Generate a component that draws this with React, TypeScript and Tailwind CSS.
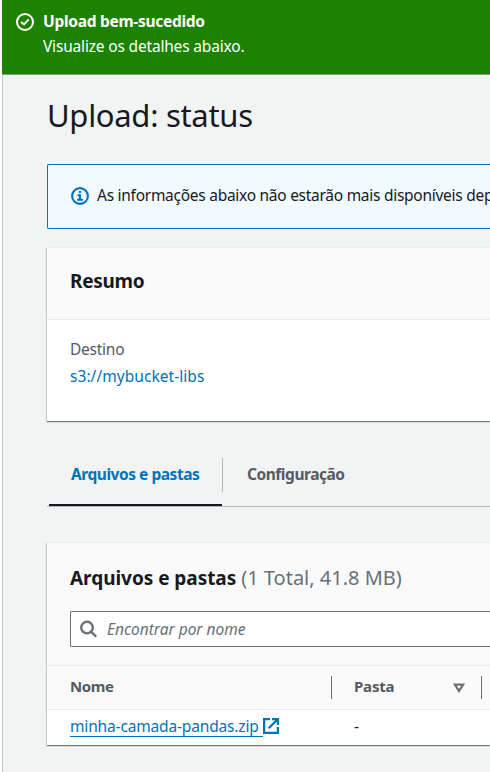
import React from "react";

const FONT = "font-['Noto_Sans','Open_Sans',sans-serif]";

function CheckCircle() {
  return (
    <svg className="h-[18px] w-[18px] shrink-0" viewBox="0 0 18 18" fill="none" stroke="#fff" strokeWidth="2">
      <circle cx="9" cy="9" r="8" />
      <path d="M5 9 8 11.4 12.7 6.4" />
    </svg>
  );
}

function InfoCircle() {
  return (
    <svg className="mb-px h-[18px] w-[18px] shrink-0" viewBox="0 0 18 18" fill="none" stroke="#0073bb" strokeWidth="2.1">
      <circle cx="9" cy="9" r="7.9" />
      <path d="M9 4v2M6.5 8.2H9v4M6 12.8h6" />
    </svg>
  );
}

function SearchIcon() {
  return (
    <svg className="h-[18px] w-[18px] shrink-0" viewBox="0 0 18 18" fill="none" stroke="#687078" strokeWidth="2.4">
      <circle cx="7" cy="7.6" r="5.8" />
      <path d="m11.2 11.8 5 4.8" />
    </svg>
  );
}

function ExternalIcon() {
  return (
    <svg className="mt-[3px] h-4 w-4 shrink-0" viewBox="0 0 16 16" fill="none" stroke="#0073bb" strokeWidth="2.3">
      <path d="M7 1.1H1.1v13.8h13.8V9M9 1.1h5.9V7M14.7 1.3 5.7 10.3" />
    </svg>
  );
}

export default function App() {
  return (
    <div className={`${FONT} h-[772px] w-[490px] overflow-hidden whitespace-nowrap bg-white pl-[2px] text-[15.5px] leading-[22px] text-[#16191f]`}>
      <header className="flex h-[74px] gap-[9px] bg-[#1d8102] pl-[14px] pt-[11px] text-white">
        <div className="pt-[2px]">
          <CheckCircle />
        </div>
        <div className="leading-[25px]">
          <div className="-mt-[2px] font-bold tracking-[-0.28px]">Upload bem-sucedido</div>
          <div className="tracking-[-0.18px]">Visualize os detalhes abaixo.</div>
        </div>
      </header>

      <main className="h-[698px] border-l border-t border-[#c1c9c9] border-t-[#879596] bg-[#f2f3f3] pl-[44px]">
        <h1 className="h-[89px] pt-[20px] text-[31px] leading-[40px] tracking-[-0.3px]">Upload: status</h1>

        <div className="flex h-[65px] items-center gap-[8px] rounded-l-[2px] border border-r-0 border-[#0073bb] bg-[#f1faff] pl-[23px]">
          <InfoCircle />
          <span className="pb-[3px] tracking-[-0.27px]">As informações abaixo não estarão mais disponíveis dep</span>
        </div>

        <section className="mt-[18px] h-[174px] border-t border-[#eaeded] bg-white shadow-[0_1px_1px_0_rgba(0,28,36,0.5),-1px_1px_1px_0_rgba(0,28,36,0.1)]">
          <div className="flex h-[72px] items-center border-b border-[#eaeded] bg-[#fafafa] pl-[23px] pb-[5px] text-[19px] font-bold">
            <h2 className="tracking-[-0.3px]">Resumo</h2>
          </div>
          <div className="pl-[23px] pt-[16px] leading-[27px]">
            <div className="tracking-[-0.25px] text-[#545b64]">Destino</div>
            <a className="block tracking-[0.05px] text-[#0073bb]">s3://mybucket-libs</a>
          </div>
        </section>

        <nav className="mt-[37px] flex h-[49px] border-b border-[#aab7b8] font-bold">
          <div className="ml-[2px] h-[48px] w-[173px] border-b-2 border-[#16191f] pl-[22px] pt-[5px]">
            <span className="tracking-[-0.46px] text-[#0073bb]">Arquivos e pastas</span>
          </div>
          <div className="h-[34px] w-px bg-[#aab7b8]" />
          <span className="pl-[24px] pt-[5px] tracking-[-0.46px] text-[#545b64]">Configuração</span>
        </nav>

        <section className="mt-[35px] h-[203px] border-t border-[#eaeded] bg-white shadow-[0_1px_1px_0_rgba(0,28,36,0.5),-1px_1px_1px_0_rgba(0,28,36,0.1)]">
          <div className="h-[123px] border-b border-[#eaeded] bg-[#fafafa] pl-[23px] pt-[21px]">
            <h2 className="flex h-[47px] gap-[5px] text-[19px] leading-[28px]">
              <span className="font-bold tracking-[-0.04px]">Arquivos e pastas</span>
              <span className="text-[20px] text-[#687078]">(1 Total, 41.8 MB)</span>
            </h2>
            <div className="flex h-[36px] items-center gap-[9px] rounded-l-[2px] border border-r-0 border-[#687078] bg-white pl-[9px] italic text-[#687078]">
              <SearchIcon />
              <span className="pb-px">Encontrar por nome</span>
            </div>
          </div>
          <div className="flex h-[44px] items-center border-b border-[#eaeded] bg-[#fafafa] pl-[23px] text-[15px] font-bold text-[#545b64]">
            <span className="w-[261px] shrink-0 pb-[3px] tracking-[-0.4px]">Nome</span>
            <div className="h-[23px] w-px shrink-0 bg-[#687078]" />
            <span className="w-[121px] shrink-0 pb-[3px] pl-[22px] tracking-[-0.2px]">Pasta</span>
            <svg className="h-[10px] w-[12px] shrink-0" viewBox="0 0 12 10" fill="none" stroke="#687078" strokeWidth="2.2">
              <path d="M1.8 1.6h8.4L6 8Z" />
            </svg>
            <div className="ml-[16px] h-[23px] w-px shrink-0 bg-[#687078]" />
          </div>
          <div className="flex h-[35px] items-start pl-[23px] pt-[5px]">
            <div className="flex w-[284px] text-[#0073bb]">
              <a className="h-[22px] w-[193px] border-b border-[#0073bb] tracking-[-0.16px]">minha-camada-pandas.zip</a>
              <ExternalIcon />
            </div>
            <span>-</span>
          </div>
        </section>
      </main>
    </div>
  );
}
